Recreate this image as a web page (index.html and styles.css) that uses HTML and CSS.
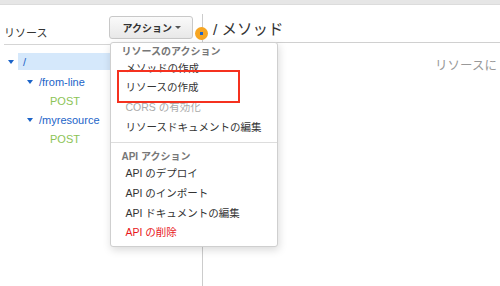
FILE: index.html
```html
<!DOCTYPE html>
<html lang="ja">
<head>
    <meta charset="UTF-8">
    <title>リソース</title>
    <link rel="stylesheet" href="styles.css">
</head>
<body>
    <div class="topbar"></div>
    <div class="main">
        <div class="sidebar">
            <div class="sidebar-head">
                <span class="label">リソース</span>
                <div class="actions">
                    <button class="btn">アクション<span class="caret"></span></button>
                    <div class="menu">
                        <div class="menu-head">リソースのアクション</div>
                        <div class="menu-item">メソッドの作成</div>
                        <div class="menu-item">リソースの作成</div>
                        <div class="menu-item disabled">CORS の有効化</div>
                        <div class="menu-item">リソースドキュメントの編集</div>
                        <div class="menu-divider"></div>
                        <div class="menu-head">API アクション</div>
                        <div class="menu-item">API のデプロイ</div>
                        <div class="menu-item">API のインポート</div>
                        <div class="menu-item">API ドキュメントの編集</div>
                        <div class="menu-item danger">API の削除</div>
                        <div class="highlight"></div>
                    </div>
                </div>
            </div>
            <ul class="tree">
                <li class="node selected"><span class="arrow"></span><span class="path">/</span></li>
                <li class="node lvl1"><span class="arrow"></span><span class="path">/from-line</span></li>
                <li class="node lvl2"><span class="method">POST</span></li>
                <li class="node lvl1"><span class="arrow"></span><span class="path">/myresource</span></li>
                <li class="node lvl2"><span class="method">POST</span></li>
            </ul>
            <span class="dot"></span>
        </div>
        <div class="content">
            <div class="content-head">
                <h2>/ メソッド</h2>
            </div>
            <div class="content-body">リソースに</div>
        </div>
    </div>
</body>
</html>
```

FILE: styles.css
```css
body {
    margin: 0;
    font-family: "Liberation Sans", "Noto Sans CJK JP", sans-serif;
    background: #fff;
    color: #333;
    width: 500px;
    height: 286px;
    overflow: hidden;
}
.topbar {
    height: 4px;
    background: #e6e6e6;
    border-bottom: 1px solid #dcdcdc;
}
.main {
    display: flex;
    margin-top: 9px;
    height: 272px;
}
.sidebar {
    position: relative;
    width: 198px;
    margin-left: 4px;
    border-right: 1px solid #ccc;
}
.sidebar-head {
    display: flex;
    align-items: center;
    height: 30px;
    border-bottom: 1px solid #d5d5d5;
}
.label {
    font-size: 11px;
    margin-top: 6px;
    color: #333;
}
.actions {
    position: relative;
    margin-left: 62px;
    margin-top: -4px;
}
.btn {
    display: flex;
    align-items: center;
    height: 23px;
    width: 84px;
    padding: 0 0 0 12px;
    border: 1px solid #c8c8c8;
    border-radius: 3px;
    background: linear-gradient(#fafafa, #e8e8e8);
    font-family: inherit;
    font-size: 10px;
    font-weight: bold;
    color: #333;
}
.caret {
    margin-left: 3px;
    margin-top: 1px;
    border-left: 3px solid transparent;
    border-right: 3px solid transparent;
    border-top: 3px solid #555;
}
.menu {
    position: absolute;
    left: 1px;
    top: 26px;
    width: 168px;
    height: 205px;
    box-sizing: border-box;
    padding-top: 2px;
    background: #fff;
    border: 1px solid #cfcfcf;
    border-radius: 3px;
    box-shadow: 1px 3px 8px rgba(0,0,0,0.15);
    z-index: 5;
}
.menu-head {
    font-size: 10px;
    font-weight: bold;
    color: #777;
    padding-left: 10px;
    line-height: 14px;
}
.menu-item {
    font-size: 10.5px;
    line-height: 19.7px;
    padding-left: 14px;
    color: #333;
}
.menu-item.disabled {
    color: #aaa;
}
.menu-item.danger {
    color: #e8161b;
}
.menu-divider {
    height: 1px;
    background: #ddd;
    margin: 5px 0 7px;
}
.highlight {
    position: absolute;
    left: 6px;
    top: 27px;
    width: 119px;
    height: 29px;
    border: 2.5px solid #f5311f;
}
.dot {
    position: absolute;
    left: 191px;
    top: 13px;
    width: 13px;
    height: 13px;
    border-radius: 50%;
    background: #f7a623;
}
.dot::after {
    content: "";
    position: absolute;
    left: 5px;
    top: 5px;
    width: 3px;
    height: 3px;
    background: #1c64c8;
}
.tree {
    list-style: none;
    margin: 0;
    padding: 8px 0 0;
    font-size: 11px;
}
.node {
    display: flex;
    align-items: center;
    height: 19px;
}
.node.selected {
    background: #d5e8fb;
    margin-left: 14px;
    margin-right: 0;
    height: 17px;
    margin-bottom: 2px;
}
.node.selected .arrow {
    margin-left: -10px;
    margin-right: 9px;
}
.arrow {
    border-left: 3.5px solid transparent;
    border-right: 3.5px solid transparent;
    border-top: 4px solid #1c64c8;
    margin-right: 6px;
}
.lvl1 {
    padding-left: 23px;
}
.lvl2 {
    padding-left: 46px;
}
.path {
    color: #1c64c8;
}
.method {
    color: #8cc456;
}
.content {
    flex: 1;
    min-width: 0;
}
.content-head {
    height: 28px;
    border-bottom: 1px solid #d0d0d0;
    display: flex;
    align-items: center;
    padding-left: 10px;
}
h2 {
    margin: 0;
    font-size: 15.5px;
    font-weight: normal;
    color: #333;
}
.content-body {
    font-size: 12.5px;
    color: #999;
    margin-top: 12px;
    padding-left: 232px;
    white-space: nowrap;
}
```
